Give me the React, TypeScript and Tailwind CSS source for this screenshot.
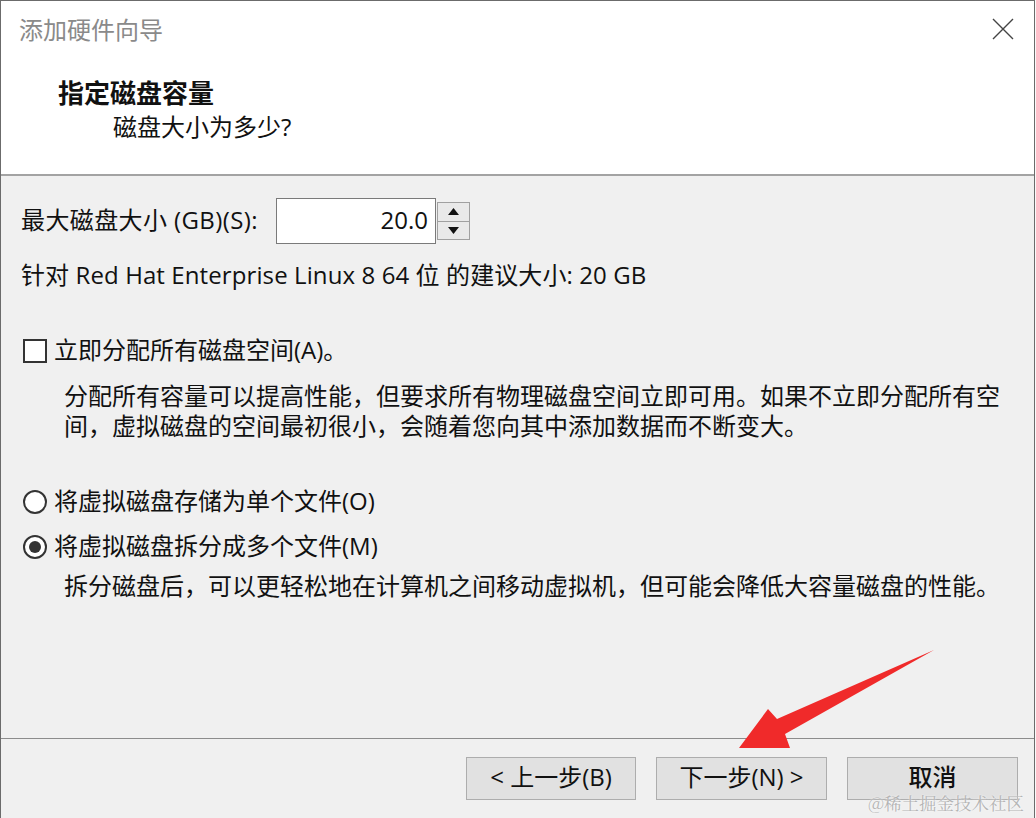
import React, { useState } from 'react';

const App = () => {
  const [allocateNow, setAllocateNow] = useState(false);
  const [split, setSplit] = useState(true);
  const [size, setSize] = useState('20.0');

  return (
    <div className="relative w-[1036px] h-[818px] overflow-hidden bg-[#fafafa] font-['Open_Sans','Noto_Sans_CJK_SC',sans-serif] text-[#111]">
      <div className="w-[1035px] h-[818px] flex flex-col border-l border-r border-t border-[#6b6b6b]">
        {/* header */}
        <div className="h-[175px] bg-white border-b-2 border-[#a3a3a3] flex flex-col">
          <div className="flex items-center justify-between pt-[14px] pl-[18px] pr-[20px] h-[44px]">
            <span className="text-[24px] leading-[30px] text-[#8a8a8a]">添加硬件向导</span>
            <svg width="22" height="22" viewBox="0 0 22 22" className="mt-[-2px]">
              <path d="M1 1 L21 21 M21 1 L1 21" stroke="#444" strokeWidth="1.4" fill="none" />
            </svg>
          </div>
          <div className="mt-[33px] pl-[57px] text-[26px] leading-[30px] font-bold">指定磁盘容量</div>
          <div className="mt-[4px] pl-[112px] text-[24px] leading-[30px]">磁盘大小为多少?</div>
        </div>

        {/* body */}
        <div className="flex-1 bg-[#f0f0f0] flex flex-col text-[24px] whitespace-nowrap">
          <div className="mt-[22px] pl-[20px] h-[46px] flex items-center">
            <span className="leading-[30px] mt-[-2px] tracking-[0.4px]">最大磁盘大小 (GB)(S):</span>
            <div className="ml-[18px] w-[160px] h-[46px] bg-white border border-[#7a7a7a] flex items-center justify-end pr-[7px]">
              <input
                value={size}
                onChange={(e) => setSize(e.target.value)}
                className="w-full text-right bg-transparent outline-none leading-[30px] mt-[-3px]"
              />
            </div>
            <div className="ml-[1px] w-[33px] h-[38px] flex flex-col border border-[#a0a0a0] bg-[#e9e9e9]">
              <button className="flex-1 flex items-center justify-center border-b border-[#a0a0a0]">
                <svg width="11" height="7" viewBox="0 0 11 7"><path d="M5.5 0 L11 7 L0 7 Z" fill="#111" /></svg>
              </button>
              <button className="flex-1 flex items-center justify-center">
                <svg width="11" height="7" viewBox="0 0 11 7"><path d="M0 0 L11 0 L5.5 7 Z" fill="#111" /></svg>
              </button>
            </div>
          </div>

          <div className="mt-[16px] pl-[20px] leading-[30px] tracking-[0.1px]">针对 Red Hat Enterprise Linux 8 64 位 的建议大小: 20 GB</div>

          <div className="mt-[46px] pl-[22px] h-[30px] flex items-center cursor-pointer" onClick={() => setAllocateNow((v) => !v)}>
            <div className="w-[24px] h-[24px] bg-white border-2 border-[#333] flex items-center justify-center">
              {allocateNow && <span className="text-[18px] leading-none">✓</span>}
            </div>
            <span className="ml-[7px] leading-[30px] mt-[-2px]">立即分配所有磁盘空间(A)。</span>
          </div>
          <div className="mt-[15px] pl-[63px] leading-[30px]">
            <div>分配所有容量可以提高性能，但要求所有物理磁盘空间立即可用。如果不立即分配所有空</div>
            <div>间，虚拟磁盘的空间最初很小，会随着您向其中添加数据而不断变大。</div>
          </div>

          <div className="mt-[46px] pl-[22px] h-[30px] flex items-center cursor-pointer" onClick={() => setSplit(false)}>
            <div className="w-[24px] h-[24px] rounded-full bg-white border-2 border-[#333] flex items-center justify-center">
              {!split && <div className="w-[12px] h-[12px] rounded-full bg-[#333]" />}
            </div>
            <span className="ml-[7px] leading-[30px] mt-[-2px]">将虚拟磁盘存储为单个文件(O)</span>
          </div>
          <div className="mt-[15px] pl-[22px] h-[30px] flex items-center cursor-pointer" onClick={() => setSplit(true)}>
            <div className="w-[24px] h-[24px] rounded-full bg-white border-2 border-[#333] flex items-center justify-center">
              {split && <div className="w-[12px] h-[12px] rounded-full bg-[#333]" />}
            </div>
            <span className="ml-[7px] leading-[30px] mt-[-2px]">将虚拟磁盘拆分成多个文件(M)</span>
          </div>
          <div className="mt-[9px] pl-[63px] leading-[30px]">拆分磁盘后，可以更轻松地在计算机之间移动虚拟机，但可能会降低大容量磁盘的性能。</div>

          {/* footer */}
          <div className="mt-auto border-t border-[#8c8c8c] h-[80px] flex items-start justify-end pt-[18px] pr-[16px] gap-[20px]">
            <button className="w-[170px] h-[43px] bg-[#e1e1e1] border border-[#adadad] leading-[30px] pb-[3px]">&lt; 上一步(B)</button>
            <button className="w-[171px] h-[43px] bg-[#e1e1e1] border border-[#adadad] leading-[30px] pb-[3px]">下一步(N) &gt;</button>
            <button className="w-[171px] h-[43px] bg-[#e1e1e1] border border-[#adadad] leading-[30px] pb-[3px] font-medium">取消</button>
          </div>
        </div>
      </div>

      {/* red annotation arrow */}
      <svg className="absolute left-0 top-0 pointer-events-none" width="1036" height="818" viewBox="0 0 1036 818">
        <polygon points="739,748 768,709 777,719 934,650 785,734 790,748" fill="#f02a2a" />
      </svg>

      {/* watermark */}
      <div className="absolute left-[868px] top-[791px] text-[17.5px] leading-[24px] text-[#b4b4b4] font-['Noto_Serif_CJK_SC','Noto_Sans_CJK_SC',serif] [text-shadow:0_0_2px_#fff]">
        @稀土掘金技术社区
      </div>
    </div>
  );
};

export default App;
